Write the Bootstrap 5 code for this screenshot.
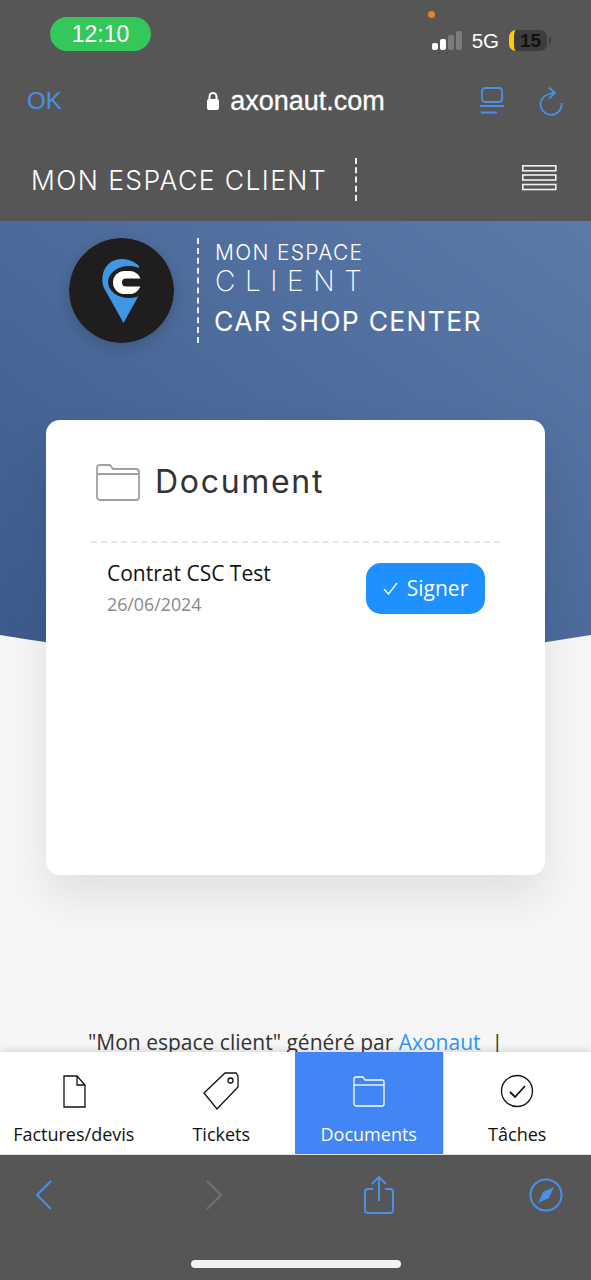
<!DOCTYPE html>
<html lang="fr">
<head>
  <meta charset="UTF-8">
  <title>Mon espace client</title>
  <link href="https://cdn.jsdelivr.net/npm/bootstrap@5.3.0/dist/css/bootstrap.min.css" rel="stylesheet">
  <style>
    html, body { height: 100%; }
    body { background: #f6f6f6; font-family: "Open Sans", sans-serif; overflow: hidden; }
    .ecran { height: 1280px; width: 591px; }
    .gris { background: #565656; }
    .ios-statut { height: 68px; padding: 17px 40px 0 50px; font-family: "Liberation Sans", sans-serif; color: #fff; }
    .heure { width: 101px; height: 34px; background: #34c759; border-radius: 17px; font-size: 23px; line-height: 34px; text-align: center; }
    .signal { margin-top: 13px; gap: 2px; align-items: flex-end; height: 20px; margin-right: 10px; }
    .signal i { display: block; width: 6px; border-radius: 2px; background: #fff; }
    .signal i.off { background: #7c7c7c; }
    .reseau { font-size: 20.5px; margin-top: 10px; margin-right: 10px; line-height: 28px; }
    .batterie { margin-top: 13px; width: 38px; height: 21px; background: #3d3d3d; border-radius: 7px; color: #111; font-size: 19px; font-weight: 700; line-height: 21px; text-align: center; overflow: hidden; border-left: 5px solid #ffcc00; }
    .batterie-nez { width: 2px; height: 7px; margin: 20px 0 0 2px; background: #3d3d3d; border-radius: 0 2px 2px 0; }
    .pastille { width: 7px; height: 7px; background: #e08a1c; border-radius: 50%; top: 11px; left: 428px; }
    .safari { height: 66px; padding: 0 27px; color: #fff; }
    .ok { color: #4a90e8; font-size: 24px; font-family: "Liberation Sans", sans-serif; width: 90px; }
    .domaine { font-family: "Liberation Sans", sans-serif; font-size: 27px; font-weight: 500; -webkit-text-stroke: .3px #fff; gap: 10px; }
    .entete { height: 87px; padding: 6px 34px 0 31px; color: #fff; }
    .entete-titre { font-family: "Inter", sans-serif; font-weight: 300; font-size: 26.5px; letter-spacing: 1.4px; white-space: nowrap; }
    .entete-sep { height: 43px; border-left: 2px dashed #eee; margin-left: 28px; margin-top: -2px; }
    .contenu { position: relative; flex: 1 1 auto; min-height: 0; overflow: hidden; background: #f6f6f6; }
    .fond { position: absolute; top: 0; left: 0; }
    .marque { position: relative; padding: 17px 0 0 69px; height: 199px; color: #fff; }
    .logo { width: 105px; height: 105px; border-radius: 50%; box-shadow: 0 4px 14px rgba(0,0,0,.18); }
    .marque-sep { height: 105px; border-left: 2px dashed #eee; margin: 0 15px 0 23px; }
    .marque-texte { font-family: "Inter", sans-serif; font-weight: 300; }
    .l1 { font-size: 21px; line-height: 24px; margin-top: 3px; letter-spacing: 1.3px; margin-left: 1px; }
    .l2 { font-size: 28px; line-height: 32px; letter-spacing: 9.6px; font-weight: 200; margin-left: 1px; }
    .l3 { font-size: 26.5px; line-height: 34px; margin-top: 7px; font-weight: 400; letter-spacing: 1.3px; white-space: nowrap; }
    .carte { position: relative; margin: 0 46px 0 46px; height: 455px; background: #fff; border-radius: 14px; box-shadow: 0 22px 45px rgba(0,0,0,.09); padding: 45px 45px 0 45px; }
    .carte-titre { font-family: "Inter", sans-serif; font-size: 32px; letter-spacing: 1.7px; color: #333; font-weight: 400; gap: 15px; height: 76px; padding-left: 5px; padding-bottom: 42px; }
    .doc-ligne { border-top: 2px dashed #e6e6e6; padding: 17px 15px 0 16px; }
    .doc-nom { font-size: 21px; line-height: 27px; color: #111; }
    .doc-date { font-size: 17.8px; color: #888; line-height: 24px; margin-top: 5px; }
    .btn-signer { background: #1e90ff; color: #fff; border: 0; border-radius: 15px; width: 119px; height: 51px; font-size: 21px; padding: 0; gap: 9px; margin-top: 3px; }
    .btn-signer:hover { background: #1e90ff; color: #fff; }
    .pied { position: relative; text-align: center; font-size: 21px; color: #333; margin-top: 154px; line-height: 27px; white-space: nowrap; }
    .pied a { color: #2f95f5; text-decoration: none; }
    .onglets { height: 102px; background: #fff; position: relative; box-shadow: 0 -2px 8px rgba(0,0,0,.12); }
    .onglet { flex: 1 1 0; color: #111; font-size: 18px; text-decoration: none; padding-top: 20px; }
    .onglet svg { height: 38px; display: block; margin-bottom: 11px; }
    .onglet.actif { background: #4285f4; color: #fff; border-right: 1px solid #cfe0fb; }
    .barre-bas { height: 127px; position: relative; border-top: 1px solid #ddd; }
    .outils { padding: 21px 0 0 26px; }
    .outil { width: 36px; display: flex; justify-content: center; }
    .indicateur { position: absolute; left: 191px; bottom: 12px; width: 210px; height: 8px; border-radius: 4px; background: #f2f2f2; }
  </style>
</head>
<body>
  <div class="ecran d-flex flex-column position-relative">
    <div class="gris">
      <div class="ios-statut d-flex justify-content-between">
        <div class="heure">12:10</div>
        <div class="d-flex">
          <div class="signal d-flex">
            <i style="height:7px"></i><i style="height:11px"></i><i class="off" style="height:15px"></i><i class="off" style="height:19px"></i>
          </div>
          <div class="reseau">5G</div>
          <div class="batterie">15</div>
          <div class="batterie-nez"></div>
        </div>
      </div>
      <span class="pastille position-absolute"></span>
      <div class="safari d-flex align-items-center justify-content-between">
        <div class="ok">OK</div>
        <div class="domaine d-flex align-items-center">
          <svg width="14" height="20" viewBox="0 0 14 20"><path d="M3.500 9V5.500a3.500 3.500 0 0 1 7 0V9" fill="none" stroke="#fff" stroke-width="2"/><rect x="1" y="8" width="12" height="11" rx="2" fill="#fff"/></svg>
          axonaut.com
        </div>
        <div class="d-flex align-items-center" style="gap:34px;width:90px;justify-content:flex-end">
          <svg width="24" height="30" viewBox="0 0 24 30" fill="none" stroke="#4a90e8" stroke-width="1.800" class="flex-shrink-0"><rect x="2" y="2" width="20" height="14" rx="3"/><path d="M0 20h24M1 26.500h16"/></svg>
          <svg width="26" height="30" viewBox="0 0 26 30" fill="none" stroke="#4a90e8" stroke-width="1.800" class="flex-shrink-0"><path d="M9.500 8.500A10.500 10.500 0 1 0 23.500 17"/><path d="M9.500 8.500c3-1 6-1.500 7-1.500M11 1.500l6 5.500-6 5.500"/></svg>
        </div>
      </div>
      <div class="entete d-flex align-items-center">
        <div class="entete-titre">MON ESPACE CLIENT</div>
        <div class="entete-sep"></div>
        <svg class="ms-auto" width="35" height="26" viewBox="0 0 35 26" fill="none" stroke="#f2f2f2" stroke-width="1.600" style="margin-top:-6px"><rect x=".8" y=".8" width="33" height="5"/><rect x=".8" y="10" width="33" height="5"/><rect x=".8" y="19.500" width="33" height="5"/></svg>
      </div>
    </div>

    <div class="contenu">
      <svg class="fond" width="591" height="440" viewBox="0 0 591 440">
        <defs><linearGradient id="degrade" x1="1" y1="0" x2="0" y2="1"><stop offset="0" stop-color="#5c7aa8"/><stop offset="1" stop-color="#3b5a8b"/></linearGradient></defs>
        <path d="M0 0H591V414Q296 464 0 414Z" fill="url(#degrade)"/>
      </svg>
      <div class="marque d-flex">
        <svg class="logo flex-shrink-0" viewBox="0 0 105 105">
          <circle cx="52.500" cy="52.500" r="52.500" fill="#1f1d1d"/>
          <path d="M54.500 85L35 50C30 38 36 21 53 21C60 21 66 24 70 28V57Z" fill="#3f97e3"/>
          <ellipse cx="60" cy="44" rx="21" ry="16" fill="#1f1d1d"/>
          <rect x="44" y="33" width="28" height="23" rx="11.500" fill="#fff"/>
          <rect x="53" y="40.500" width="22" height="8" rx="4" fill="#1f1d1d"/>
        </svg>
        <div class="marque-sep"></div>
        <div class="marque-texte">
          <div class="l1">MON ESPACE</div>
          <div class="l2">CLIENT</div>
          <div class="l3">CAR SHOP CENTER</div>
        </div>
      </div>

      <div class="carte">
        <div class="carte-titre d-flex align-items-center">
          <svg width="44" height="38" viewBox="0 0 44 38" fill="none" stroke="#a0a0a0" stroke-width="1.800"><path d="M1 5a3 3 0 0 1 3-3h10l3 4h23a3 3 0 0 1 3 3v25a3 3 0 0 1-3 3H4a3 3 0 0 1-3-3z"/><path d="M1 11h42"/></svg>
          <span>Document</span>
        </div>
        <div class="doc-ligne d-flex justify-content-between">
          <div>
            <div class="doc-nom">Contrat CSC Test</div>
            <div class="doc-date">26/06/2024</div>
          </div>
          <button class="btn btn-signer d-flex align-items-center justify-content-center" type="button">
            <svg width="15" height="13" viewBox="0 0 15 13" fill="none" stroke="#fff" stroke-width="1.300"><path d="M1 7l4.500 5L14 1"/></svg>
            Signer
          </button>
        </div>
      </div>

      <div class="pied">"Mon espace client" généré par <a href="#">Axonaut</a> &nbsp;|</div>
    </div>

    <nav class="onglets d-flex">
      <a class="onglet d-flex flex-column align-items-center" href="#">
        <svg width="24" viewBox="0 0 24 38" fill="none" stroke="#111" stroke-width="1.300"><path d="M2 4h13l8 9v22H2z"/><path d="M15 4v9h8"/></svg>
        Factures/devis
      </a>
      <a class="onglet d-flex flex-column align-items-center" href="#">
        <svg width="36" viewBox="0 0 36 38" fill="none" stroke="#111" stroke-width="1.300"><path d="M1 21L22 1h11l2 3v11L14 37z"/><circle cx="27.500" cy="8.500" r="2.500"/></svg>
        Tickets
      </a>
      <a class="onglet actif d-flex flex-column align-items-center" href="#">
        <svg width="32" viewBox="0 0 32 38" fill="none" stroke="#fff" stroke-width="1.300"><path d="M1 7a2 2 0 0 1 2-2h7l2 3h17a2 2 0 0 1 2 2v22a2 2 0 0 1-2 2H3a2 2 0 0 1-2-2z"/><path d="M1 13h30"/></svg>
        Documents
      </a>
      <a class="onglet d-flex flex-column align-items-center" href="#">
        <svg width="34" viewBox="0 0 34 38" fill="none" stroke="#111" stroke-width="1.300"><circle cx="17" cy="19" r="15.500"/><path d="M10 20l5 5 10-11" stroke-width="1.800"/></svg>
        Tâches
      </a>
    </nav>

    <div class="gris barre-bas">
      <div class="outils d-flex align-items-center">
        <div class="outil"><svg width="18" height="32" viewBox="0 0 18 32" fill="none" stroke="#4a90e8" stroke-width="2"><path d="M16 2L2 16l14 14"/></svg></div>
        <div class="outil" style="margin-left:134px"><svg width="18" height="32" viewBox="0 0 18 32" fill="none" stroke="#727272" stroke-width="2"><path d="M2 2l14 14L2 30"/></svg></div>
        <div class="outil" style="margin-left:129px"><svg width="30" height="38" viewBox="0 0 30 38" fill="none" stroke="#4a90e8" stroke-width="2"><path d="M9 13H4a3 3 0 0 0-3 3v18a3 3 0 0 0 3 3h22a3 3 0 0 0 3-3V16a3 3 0 0 0-3-3h-5"/><path d="M15 25V2M8 8l7-7 7 7"/></svg></div>
        <div class="outil" style="margin-left:131px"><svg width="34" height="34" viewBox="0 0 34 34" fill="none" stroke="#4a90e8" stroke-width="2"><circle cx="17" cy="17" r="15.500"/><path d="M9 25l5-11 11-5-5 11z" fill="#4a90e8" stroke="none"/></svg></div>
      </div>
      <div class="indicateur"></div>
    </div>
  </div>
  <script src="https://cdn.jsdelivr.net/npm/bootstrap@5.3.0/dist/js/bootstrap.bundle.min.js"></script>
</body>
</html>
